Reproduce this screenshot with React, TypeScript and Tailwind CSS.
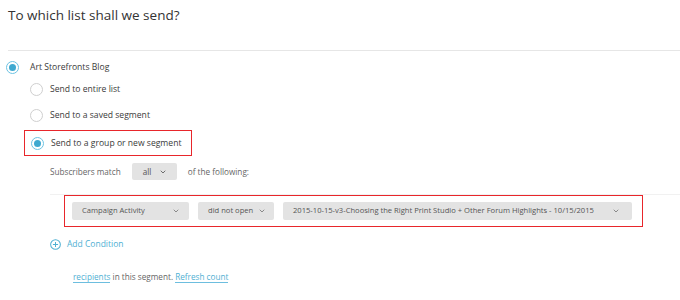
import { ChevronDown } from 'lucide-react';

function Radio({ checked }: { checked?: boolean }) {
  return (
    <span
      className={`flex h-[13px] w-[13px] shrink-0 items-center justify-center rounded-full border ${
        checked ? 'border-[#6cc3e3] border-[1.5px]' : 'border-[#cfcfcf]'
      } bg-white`}
    >
      {checked && <span className="h-[7px] w-[7px] rounded-full bg-[#3fa9d0]" />}
    </span>
  );
}

function Select({ label, className }: { label: string; className: string }) {
  return (
    <div
      className={`flex h-[18px] shrink-0 items-center justify-between whitespace-nowrap rounded-[2px] bg-[#e3e3e3] text-[7.6px] font-medium text-[#555] ${className}`}
    >
      <span>{label}</span>
      <ChevronDown className="h-[8px] w-[8px] text-[#777]" strokeWidth={2.5} />
    </div>
  );
}

export default function App() {
  return (
    <div
      className="h-[300px] w-[680px] overflow-hidden bg-white text-[#3a3a3a]"
      style={{ fontFamily: '"Open Sans", sans-serif' }}
    >
      <h1 className="h-[50px] pl-[8px] pt-[5px] text-[13.5px] leading-[20px] text-[#333]">
        To which list shall we send?
      </h1>

      <div className="ml-[8px] border-t border-[#e6e6e6]" />

      <div className="mt-[10px] flex h-[13px] items-center gap-[11px] pl-[6px] text-[8.6px] leading-[13px]">
        <Radio checked />
        <span>Art Storefronts Blog</span>
      </div>

      <div className="mt-[9px] flex h-[13px] items-center gap-[7px] pl-[30px] text-[8.6px] leading-[13px]">
        <Radio />
        <span>Send to entire list</span>
      </div>

      <div className="mt-[13px] flex h-[13px] items-center gap-[7px] pl-[30px] text-[8.6px] leading-[13px]">
        <Radio />
        <span>Send to a saved segment</span>
      </div>

      <div className="ml-[24px] mt-[8px] flex h-[26px] w-[168px] items-center gap-[7px] border border-[#e8262b] pl-[6px] text-[8.6px] leading-[13px]">
        <Radio checked />
        <span>Send to a group or new segment</span>
      </div>

      <div className="mt-[7px] flex h-[17px] items-center whitespace-nowrap pl-[50px] text-[8.2px] leading-[17px] text-[#666]">
        <span>Subscribers match</span>
        <div className="ml-[11px] flex h-[17px] w-[45px] items-center justify-between rounded-[2px] bg-[#e3e3e3] pl-[11px] pr-[10px] text-[#555]">
          <span>all</span>
          <ChevronDown className="h-[8px] w-[8px]" strokeWidth={2.5} />
        </div>
        <span className="ml-[11px]">of the following:</span>
      </div>

      <div className="ml-[50px] mt-[14px] border-t border-[#f1f1f1]" />

      <div className="ml-[64px] flex h-[32px] w-[579px] items-center gap-[9px] border border-[#e8262b] pl-[7px]">
        <Select label="Campaign Activity" className="w-[117px] pl-[10px] pr-[9px]" />
        <Select label="did not open" className="w-[76px] pl-[10px] pr-[8px]" />
        <Select
          label="2015-10-15-v3-Choosing the Right Print Studio + Other Forum Highlights - 10/15/2015"
          className="w-[349px] pl-[10px] pr-[12px]"
        />
      </div>

      <div className="mt-[11px] flex h-[12px] items-center gap-[6px] pl-[50px] text-[8.5px] leading-[12px] text-[#4fb0d3]">
        <svg width="11" height="11" viewBox="0 0 12 12" fill="none" stroke="#4fb0d3" strokeWidth="1.1">
          <circle cx="6" cy="6" r="5.3" />
          <path d="M6 3.2v5.6M3.2 6h5.6" />
        </svg>
        <span>Add Condition</span>
      </div>

      <div className="mt-[21px] pl-[73px] text-[8.2px] leading-[12px] text-[#666]">
        <span className="border-b border-[#6dbedf] text-[#4fb0d3]">recipients</span> in this segment.{' '}
        <span className="border-b border-[#6dbedf] text-[#4fb0d3]">Refresh count</span>
      </div>
    </div>
  );
}
